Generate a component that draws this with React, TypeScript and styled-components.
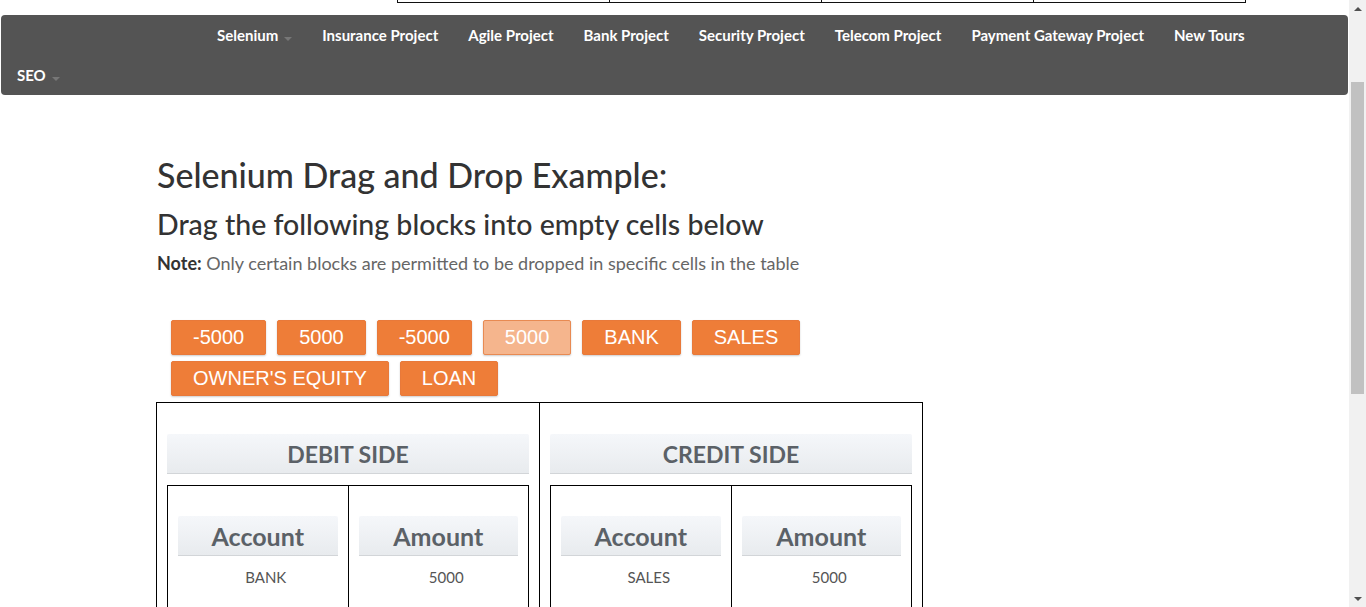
import React, { useLayoutEffect, useRef } from "react";
import styled, { createGlobalStyle } from "styled-components";

const GlobalStyle = createGlobalStyle`
  body {
    margin: 0;
    font-family: "Lato", "Noto Sans", sans-serif;
    color: #333;
    background: #fff;
  }
`;

const Shell = styled.div`
  display: flex;
  height: 100vh;
  overflow: hidden;
`;

const Viewport = styled.div`
  flex: 1;
  height: 100%;
  overflow: hidden;
`;

const ScrollTrack = styled.div`
  width: 17px;
  flex: none;
  background: #f1f1f1;
  display: flex;
  flex-direction: column;
`;

const Arrow = styled.div<{ $down?: boolean }>`
  height: 17px;
  display: flex;
  align-items: center;
  justify-content: center;
  &::after {
    content: "";
    border-left: 4px solid transparent;
    border-right: 4px solid transparent;
    ${(p) => (p.$down ? "border-top" : "border-bottom")}: 4px solid #505050;
  }
`;

const Rail = styled.div`
  flex: 1;
  padding: 65px 2px 0;
`;

const Thumb = styled.div`
  height: 312px;
  background: #c1c1c1;
`;

const Header = styled.header`
  height: 129px;
  display: flex;
  align-items: flex-end;
  padding-left: 397px;
`;

const TopTable = styled.table`
  border-collapse: collapse;
  table-layout: fixed;
  width: 849px;
  td {
    height: 40px;
    border: 1.5px solid #111;
  }
`;

const Nav = styled.nav`
  margin: 12px 1px 0;
  background: #545454;
  border-radius: 4px;
`;

const NavRow = styled.ul<{ $indent: number }>`
  list-style: none;
  margin: 0;
  padding: 0 0 0 ${(p) => p.$indent}px;
  display: flex;
  height: 40px;
  align-items: center;
`;

const NavItem = styled.li`
  padding: 0 15px;
  color: #fff;
  font-weight: 700;
  font-size: 15px;
  white-space: nowrap;
  display: flex;
  align-items: center;
`;

const Caret = styled.span`
  display: inline-block;
  width: 0;
  height: 0;
  margin: 8px 0 0 6px;
  border-left: 4px solid transparent;
  border-right: 4px solid transparent;
  border-top: 4px solid #777;
`;

const Main = styled.main`
  width: 1035px;
  margin: 0 auto;
  padding-bottom: 160px;
`;

const Title = styled.h2`
  font-size: 34px;
  font-weight: 500;
  margin: 60px 0 0;
  line-height: 40px;
  color: #333;
`;

const SubTitle = styled.h3`
  font-size: 28.5px;
  font-weight: 500;
  margin: 12px 0 0;
  line-height: 34px;
  color: #333;
`;

const Note = styled.p`
  font-size: 18px;
  color: #666;
  margin: 11px 0 0;
  line-height: 22px;
  b {
    color: #333;
  }
`;

const Blocks = styled.div`
  display: flex;
  flex-wrap: wrap;
  gap: 6px 11px;
  width: 660px;
  padding: 0 0 0 14px;
  margin-top: 46px;
  margin-bottom: 6px;
`;

const Block = styled.div<{ $faded?: boolean }>`
  height: 35px;
  box-sizing: border-box;
  padding: 0 21px;
  display: flex;
  align-items: center;
  font-family: "Liberation Sans", Arial, sans-serif;
  font-size: 20px;
  color: #fff;
  background: ${(p) => (p.$faded ? "#f5b58d" : "#ee7d38")};
  border: 1px solid ${(p) => (p.$faded ? "#e88a52" : "#e8793a")};
  border-radius: 2px;
  box-shadow: 0 1px 2px rgba(0, 0, 0, 0.2);
`;

const Ledger = styled.table`
  border-collapse: collapse;
  width: 767px;
  margin-left: -1px;
  & > tbody > tr > td {
    border: 1px solid #000;
    padding: 31px 10px 10px;
    vertical-align: top;
    width: 50%;
  }
`;

const Bar = styled.div<{ $size: number }>`
  height: 40px;
  box-sizing: border-box;
  background: linear-gradient(#f5f7fa, #e8ebee);
  border-bottom: 1.5px solid #d2d5d8;
  border-radius: 2px 2px 0 0;
  display: flex;
  align-items: center;
  justify-content: center;
  font-size: ${(p) => p.$size}px;
  font-weight: 700;
  color: #5b6167;
  font-family: "Lato", "Open Sans", sans-serif;
`;

const Inner = styled.table`
  border-collapse: collapse;
  width: 100%;
  margin-top: 11px;
  td {
    border: 1px solid #000;
    padding: 30px 10px 0;
    vertical-align: top;
    height: 180px;
  }
`;

const Cell = styled.div`
  text-align: center;
  font-size: 15px;
  color: #555;
  margin-top: 12px;
  padding-left: 16px;
`;

const Side = ({ title, account }: { title: string; account: string }) => (
  <td>
    <Bar $size={23}>{title}</Bar>
    <Inner>
      <tbody>
        <tr>
          <td style={{ width: "50%" }}>
            <Bar $size={25}>Account</Bar>
            <Cell>{account}</Cell>
          </td>
          <td>
            <Bar $size={25}>Amount</Bar>
            <Cell>5000</Cell>
          </td>
        </tr>
      </tbody>
    </Inner>
  </td>
);

const navTop = [
  "Insurance Project",
  "Agile Project",
  "Bank Project",
  "Security Project",
  "Telecom Project",
  "Payment Gateway Project",
  "New Tours",
];

const blocks = ["-5000", "5000", "-5000", "5000", "BANK", "SALES", "OWNER'S EQUITY", "LOAN"];

const App: React.FC = () => {
  const view = useRef<HTMLDivElement>(null);

  useLayoutEffect(() => {
    if (view.current) view.current.scrollTop = 126;
  }, []);

  return (
    <>
      <GlobalStyle />
      <Shell>
        <Viewport ref={view}>
          <Header>
            <TopTable>
              <tbody>
                <tr>
                  <td />
                  <td />
                  <td />
                  <td />
                </tr>
              </tbody>
            </TopTable>
          </Header>
          <Nav>
            <NavRow $indent={201}>
              <NavItem>
                Selenium
                <Caret />
              </NavItem>
              {navTop.map((n) => (
                <NavItem key={n}>{n}</NavItem>
              ))}
            </NavRow>
            <NavRow $indent={1}>
              <NavItem>
                SEO
                <Caret />
              </NavItem>
            </NavRow>
          </Nav>
          <Main>
            <Title>Selenium Drag and Drop Example:</Title>
            <SubTitle>Drag the following blocks into empty cells below</SubTitle>
            <Note>
              <b>Note:</b> Only certain blocks are permitted to be dropped in specific cells in the table
            </Note>
            <Blocks>
              {blocks.map((b, i) => (
                <Block key={i} $faded={i === 3}>
                  {b}
                </Block>
              ))}
            </Blocks>
            <Ledger>
              <tbody>
                <tr>
                  <Side title="DEBIT SIDE" account="BANK" />
                  <Side title="CREDIT SIDE" account="SALES" />
                </tr>
              </tbody>
            </Ledger>
          </Main>
        </Viewport>
        <ScrollTrack>
          <Arrow />
          <Rail>
            <Thumb />
          </Rail>
          <Arrow $down />
        </ScrollTrack>
      </Shell>
    </>
  );
};

export default App;
